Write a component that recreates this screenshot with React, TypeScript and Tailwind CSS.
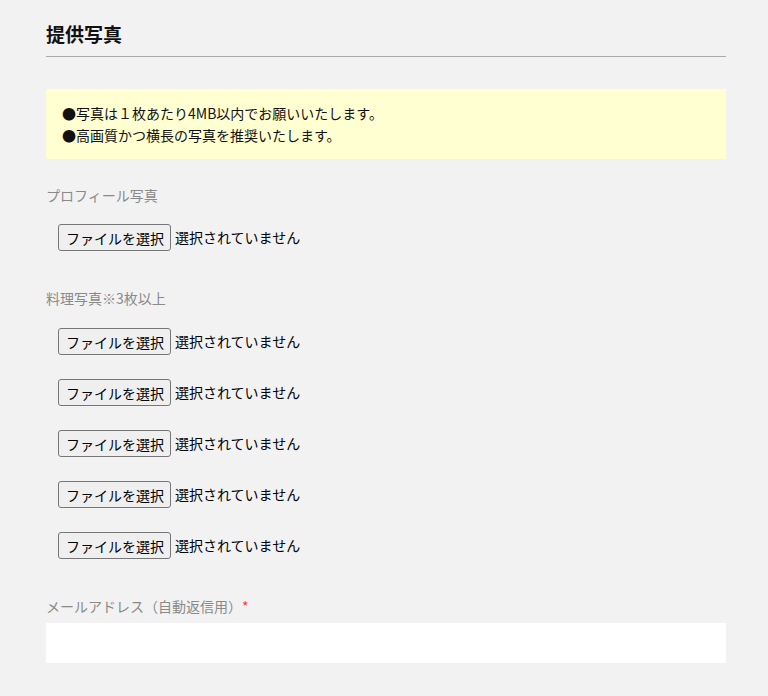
const font = { fontFamily: '"Noto Sans CJK JP", "Noto Sans", sans-serif' };

const FileRow = () => (
  <div className="flex items-center pl-3 h-[27px]">
    <span className="h-[27px] pl-[7px] pr-[6px] flex items-center bg-[#efefef] border border-[#767676] rounded-[3px] text-[14px] text-black leading-none">
      ファイルを選択
    </span>
    <span className="ml-[4px] text-[14px] text-black">選択されていません</span>
  </div>
);

export default function App() {
  return (
    <div className="min-h-[696px] bg-[#f2f2f2] pl-[46px] pr-[42px]" style={font}>
      <div className="pt-[19px]">
        <h2 className="text-[19px] font-bold text-[#111] leading-[30px] pb-[7px] border-b border-[#aaaaaa]">
          提供写真
        </h2>
      </div>

      <div className="mt-[32px] bg-[#ffffd2] px-[16px] py-[13px] text-[14px] leading-[22px] text-[#111]">
        <p>●写真は１枚あたり4MB以内でお願いいたします。</p>
        <p>●高画質かつ横長の写真を推奨いたします。</p>
      </div>

      <div className="mt-[25px] text-[14px] leading-[22px] text-[#8a8a8a]">プロフィール写真</div>
      <div className="mt-[18px]">
        <FileRow />
      </div>

      <div className="mt-[36px] text-[14px] leading-[22px] text-[#8a8a8a]">料理写真※3枚以上</div>
      <div className="mt-[19px] flex flex-col gap-[24px]">
        <FileRow />
        <FileRow />
        <FileRow />
        <FileRow />
        <FileRow />
      </div>

      <div className="mt-[36px] text-[14px] leading-[22px] text-[#8a8a8a]">
        メールアドレス（自動返信用）<span className="text-[#ff3b3b]">*</span>
      </div>
      <input type="text" className="mt-[6px] block w-full h-[40px] bg-white outline-none" />
    </div>
  );
}
